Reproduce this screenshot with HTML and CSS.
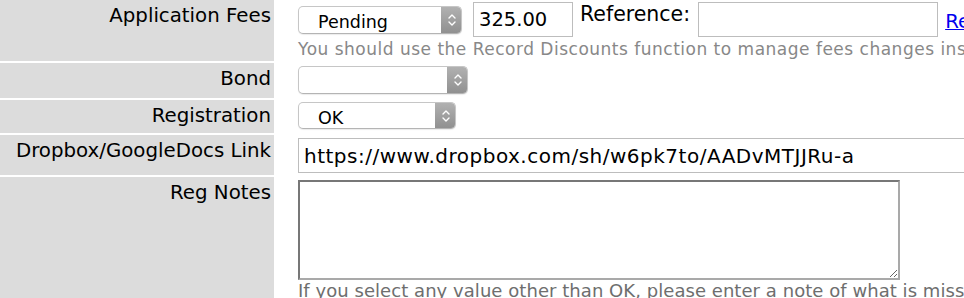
FILE: index.html
```html
<!DOCTYPE html>
<html lang="en">
<head>
    <meta charset="UTF-8">
    <title>Registration details</title>
    <link rel="stylesheet" href="styles.css">
</head>
<body>

    <table class="details">
        <tr class="row-fees">
            <th>Application Fees</th>
            <td>
                <div class="fees-line">
                    <div class="select select-fees">
                        <span class="select-value">Pending</span>
                        <span class="select-arrow">
                            <svg width="10" height="16" viewBox="0 0 10 16"><path d="M2 6 L5 3 L8 6 M2 10 L5 13 L8 10" fill="none" stroke="#fff" stroke-width="1.4" stroke-linecap="round" stroke-linejoin="round"/></svg>
                        </span>
                    </div>
                    <input type="text" class="amount" value="325.00">
                    <span class="ref-label">Reference:</span>
                    <input type="text" class="ref-input" value="">
                    <a href="#" class="ref-link">Record Discounts</a>
                </div>
                <p class="hint">You should use the Record Discounts function to manage fees changes instead of editing the amount here.</p>
            </td>
        </tr>
        <tr class="row-bond">
            <th>Bond</th>
            <td>
                <div class="select select-bond">
                    <span class="select-value"></span>
                    <span class="select-arrow">
                        <svg width="10" height="16" viewBox="0 0 10 16"><path d="M2 6 L5 3 L8 6 M2 10 L5 13 L8 10" fill="none" stroke="#fff" stroke-width="1.4" stroke-linecap="round" stroke-linejoin="round"/></svg>
                    </span>
                </div>
            </td>
        </tr>
        <tr class="row-reg">
            <th>Registration</th>
            <td>
                <div class="select select-reg">
                    <span class="select-value">OK</span>
                    <span class="select-arrow">
                        <svg width="10" height="16" viewBox="0 0 10 16"><path d="M2 6 L5 3 L8 6 M2 10 L5 13 L8 10" fill="none" stroke="#fff" stroke-width="1.4" stroke-linecap="round" stroke-linejoin="round"/></svg>
                    </span>
                </div>
            </td>
        </tr>
        <tr class="row-link">
            <th>Dropbox/GoogleDocs Link</th>
            <td>
                <input type="text" class="link-input" value="https://www.dropbox.com/sh/w6pk7to/AADvMTJJRu-a">
            </td>
        </tr>
        <tr class="row-notes">
            <th>Reg Notes</th>
            <td>
                <textarea class="notes"></textarea>
                <p class="hint hint-dark">If you select any value other than OK, please enter a note of what is missing.</p>
            </td>
        </tr>
    </table>

</body>
</html>
```

FILE: styles.css
```css
body {
    font-family: Verdana, 'DejaVu Sans', sans-serif;
    margin: 0;
    padding: 0;
    background-color: #fff;
    overflow: hidden;
    width: 964px;
    height: 298px;
}

.details {
    width: 1400px;
    table-layout: fixed;
    border-collapse: separate;
    border-spacing: 0 2px;
    margin-top: -2px;
    white-space: nowrap;
}

.details th {
    width: 271px;
    padding: 1px 3px 0 0;
    background-color: #dcdcdc;
    color: #000;
    font-weight: normal;
    font-size: 19.8px;
    line-height: 30px;
    text-align: right;
    vertical-align: top;
    overflow: hidden;
}

.details td {
    padding: 0 0 0 24px;
    vertical-align: top;
    overflow: hidden;
}

.row-fees { height: 61px; }
.row-bond { height: 35px; }
.row-reg { height: 33px; }
.row-link { height: 40px; }
.row-notes { height: 130px; }

.row-fees td { padding-top: 2px; }
.row-bond td { padding-top: 3px; }
.row-reg td { padding-top: 2px; }
.row-link td { padding-top: 3px; }
.row-notes td { padding-top: 3px; }

/* mac style popup */
.select {
    display: flex;
    align-items: stretch;
    height: 28px;
    box-sizing: border-box;
    border: 1px solid #c6c6c6;
    border-bottom-color: #b4b4b4;
    border-radius: 5px;
    background: #fff;
    box-shadow: 0 1px 1px rgba(0, 0, 0, 0.08);
    font-size: 17.5px;
    color: #000;
    overflow: hidden;
}

.select-value {
    flex: 1;
    padding: 2px 0 0 19px;
    line-height: 26px;
}

.select-arrow {
    width: 21px;
    margin: -1px -1px -1px 0;
    border-radius: 0 5px 5px 0;
    background: linear-gradient(#b2b2b2, #8f8f8f);
    display: flex;
    align-items: center;
    justify-content: center;
}

.select-fees { width: 164px; margin-top: 4px; }
.select-bond { width: 170px; }
.select-reg { width: 158px; height: 27px; }

.fees-line {
    display: flex;
    align-items: flex-start;
}

input[type="text"] {
    font-family: Verdana, 'DejaVu Sans', sans-serif;
    box-sizing: border-box;
    height: 35px;
    border: 1px solid #bdbdbd;
    padding: 0 5px;
    font-size: 19.5px;
    color: #000;
    margin: 0;
    outline: none;
}

.amount {
    width: 100px;
    margin-left: 11px !important;
}

.ref-label {
    font-size: 20.5px;
    margin: 0 8px 0 7px;
    line-height: 24px;
}

.ref-input {
    width: 240px;
}

.ref-link {
    margin: 8px 0 0 7px;
    font-size: 19.8px;
    color: #0000ee;
    text-decoration: underline;
}

.link-input {
    width: 700px;
    font-size: 20px !important;
    letter-spacing: 0.5px;
}

.hint {
    margin: 2px 0 0;
    font-size: 17px;
    line-height: 20px;
    color: #888;
    letter-spacing: 0.5px;
}

.hint-dark {
    margin-top: 1px;
    font-size: 18px;
    letter-spacing: 0.05px;
    color: #6e6e6e;
}

.notes {
    display: block;
    box-sizing: border-box;
    width: 602px;
    height: 100px;
    margin: 0;
    border-style: solid;
    border-width: 2px;
    border-color: #777 #a9a9a9 #a9a9a9 #777;
    resize: both;
}
```
